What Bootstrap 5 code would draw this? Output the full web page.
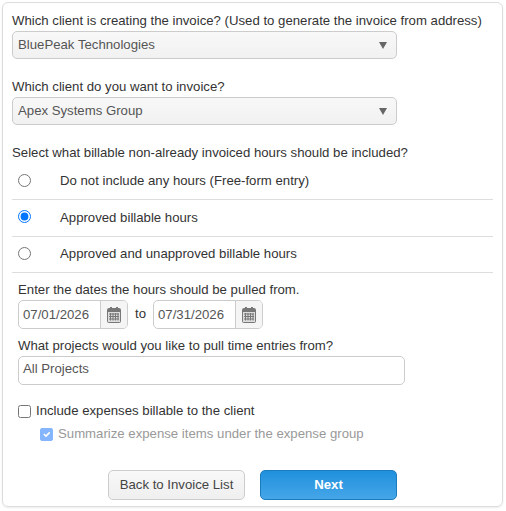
<!DOCTYPE html>
<html lang="en"><head><meta charset="utf-8"><title>Invoice</title>
<link href="https://cdn.jsdelivr.net/npm/bootstrap@5.3.0/dist/css/bootstrap.min.css" rel="stylesheet">
<style>
html,body{height:100%}
body{font-family:"Liberation Sans",Arial,sans-serif;font-size:13.2px;line-height:20px;color:#333;background:#fff;padding:2px 3px 3px 2px}
.wiz-card{height:505px;border:1px solid #ddd;border-radius:6px;box-shadow:0 1px 2px rgba(0,0,0,.08);padding:8px 9px 6px;display:flex;flex-direction:column}
.wiz-label{height:20px;margin:0;white-space:nowrap;color:#333}
.wiz-select{width:385px;height:28px;border:1px solid #ccc;border-radius:5px;background:linear-gradient(#f8f8f8,#f1f1f1);padding:0 5px;color:#555;display:flex;align-items:center;justify-content:space-between;margin-bottom:18px}
.wiz-caret{width:0;height:0;border-left:4px solid transparent;border-right:4px solid transparent;border-top:7px solid #666;margin:0 4px 0 0}
.wiz-radios{margin-top:.5px}
.wiz-radio-row{height:36.5px;border-bottom:1px solid #ddd;display:flex;align-items:center;color:#333}
.wiz-radio-row input{margin:0 0 2px 6px;width:13px;height:13px;accent-color:#0075ff}
.wiz-radio-row span{margin-left:29px}
.wiz-inset{padding-left:6px;margin-top:7px}
.wiz-date{display:flex;width:110px;height:29px;border:1px solid #ccc;border-radius:5px;overflow:hidden;color:#555;background:#fff}
.wiz-date-val{flex:1 1 auto;padding:0 4px;line-height:27px}
.wiz-date-ico{width:27px;flex:none;border-left:1px solid #ccc;background:#f5f5f5;display:flex;align-items:center;justify-content:center}
.wiz-to{width:25px;text-align:center;padding-bottom:2px;color:#333}
.wiz-dates{margin:0 0 7px}
.wiz-projects{width:387px;height:29px;border:1px solid #ccc;border-radius:5px;padding:1px 4px;color:#555;line-height:22px;margin-bottom:16px}
.wiz-check{display:flex;align-items:center;height:20px}
.wiz-check input{width:13px;height:13px;margin:0 5px 0 0;accent-color:#0075ff}
.wiz-check.sub{margin:3px 0 0 22px;color:#999}
.wiz-check .form-check-input{border-radius:2px;flex:none}
.wiz-btn{height:30px;border-radius:5px;font-size:13.2px;line-height:20px;padding:0;display:block}
.wiz-back{width:137px;border:1px solid #ccc;background:linear-gradient(#f8f8f8,#efefef);color:#444}
.wiz-next{width:137px;border:1px solid #1a7bbd;background:linear-gradient(#2090dd,#46a6e8);color:#fff;font-weight:700}
.wiz-actions{gap:15px}
</style></head>
<body>
<div class="wiz-card">
<p class="wiz-label">Which client is creating the invoice? (Used to generate the invoice from address)</p>
<div class="wiz-select"><span>BluePeak Technologies</span><i class="wiz-caret"></i></div>
<p class="wiz-label">Which client do you want to invoice?</p>
<div class="wiz-select"><span>Apex Systems Group</span><i class="wiz-caret"></i></div>
<p class="wiz-label">Select what billable non-already invoiced hours should be included?</p>
<div class="wiz-radios">
<label class="wiz-radio-row"><input type="radio" name="h"><span>Do not include any hours (Free-form entry)</span></label>
<label class="wiz-radio-row"><input type="radio" name="h" checked><span>Approved billable hours</span></label>
<label class="wiz-radio-row"><input type="radio" name="h"><span>Approved and unapproved billable hours</span></label>
</div>
<div class="wiz-inset">
<p class="wiz-label">Enter the dates the hours should be pulled from.</p>
<div class="d-flex align-items-center wiz-dates">
<div class="wiz-date"><span class="wiz-date-val">07/01/2026</span><span class="wiz-date-ico"><svg width="14" height="16" viewBox="0 0 14 16"><rect x=".5" y="1.500" width="13" height="14" rx="1" fill="#ddd" stroke="#777"/><rect x="1" y="2" width="12" height="3" fill="#777"/><rect x="3" y="0" width="2" height="3" fill="#777"/><rect x="9" y="0" width="2" height="3" fill="#777"/><path d="M2 7h10M2 9.500h10M2 12h10M3.500 6v7.500M6 6v7.500M8.500 6v7.500M11 6v7.500" stroke="#777" stroke-width="1" fill="none"/></svg></span></div>
<span class="wiz-to">to</span>
<div class="wiz-date"><span class="wiz-date-val">07/31/2026</span><span class="wiz-date-ico"><svg width="14" height="16" viewBox="0 0 14 16"><rect x=".5" y="1.500" width="13" height="14" rx="1" fill="#ddd" stroke="#777"/><rect x="1" y="2" width="12" height="3" fill="#777"/><rect x="3" y="0" width="2" height="3" fill="#777"/><rect x="9" y="0" width="2" height="3" fill="#777"/><path d="M2 7h10M2 9.500h10M2 12h10M3.500 6v7.500M6 6v7.500M8.500 6v7.500M11 6v7.500" stroke="#777" stroke-width="1" fill="none"/></svg></span></div>
</div>
<p class="wiz-label">What projects would you like to pull time entries from?</p>
<div class="wiz-projects">All Projects</div>
<label class="wiz-check"><input type="checkbox"><span>Include expenses billable to the client</span></label>
<label class="wiz-check sub"><input class="form-check-input" type="checkbox" checked disabled><span>Summarize expense items under the expense group</span></label>
</div>
<div class="d-flex justify-content-center mt-auto wiz-actions">
<button type="button" class="btn wiz-btn wiz-back">Back to Invoice List</button>
<button type="button" class="btn wiz-btn wiz-next">Next</button>
</div>
</div>
<script src="https://cdn.jsdelivr.net/npm/bootstrap@5.3.0/dist/js/bootstrap.bundle.min.js"></script>
</body></html>
